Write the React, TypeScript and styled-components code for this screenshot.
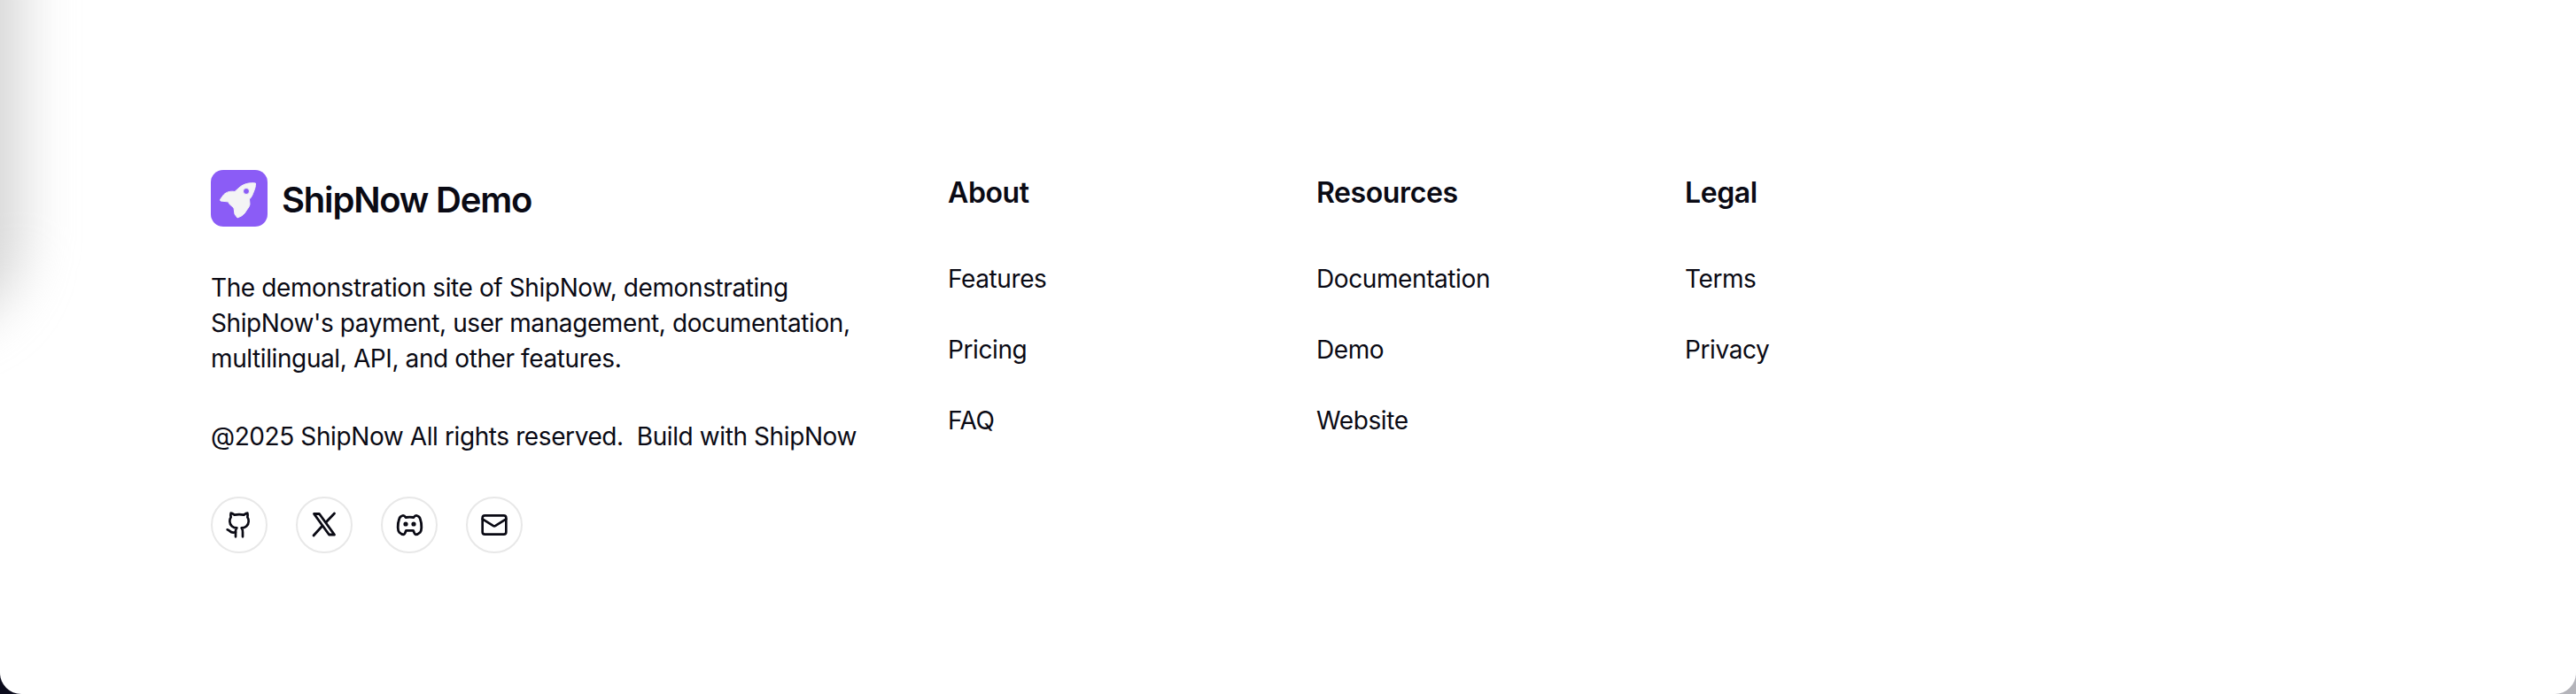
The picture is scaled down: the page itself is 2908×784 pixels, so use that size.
import React from "react";
import styled, { createGlobalStyle } from "styled-components";
import { Github, Mail } from "lucide-react";

const GlobalStyle = createGlobalStyle`
  html, body {
    margin: 0;
    padding: 0;
    background: linear-gradient(90deg, #0b0b1c 50%, #b4b4ba 50%);
  }
  * { box-sizing: border-box; }
`;

const Page = styled.footer`
  position: relative;
  width: 2908px;
  height: 784px;
  overflow: hidden;
  background: #fff;
  border-radius: 0 0 24px 24px;
  padding: 192px 238px 0;
  display: grid;
  grid-template-columns: 832px 416px 416px 416px;
  align-items: start;
  font-family: Inter, "Liberation Sans", sans-serif;
  color: #0a0a14;
  letter-spacing: -0.4px;
`;

const EdgeShade = styled.div`
  position: absolute;
  left: -80px;
  top: -80px;
  width: 104px;
  height: 450px;
  border-radius: 0 40px 100px 0;
  background: rgba(190, 190, 190, 0.65);
  filter: blur(30px);
  pointer-events: none;
`;

const Brand = styled.div`
  display: flex;
  flex-direction: column;
`;

const LogoRow = styled.div`
  display: flex;
  align-items: center;
  gap: 16px;
  height: 64px;
`;

const LogoMark = styled.svg`
  width: 64px;
  height: 64px;
  display: block;
`;

const LogoText = styled.span`
  font-size: 40px;
  line-height: 60px;
  padding-top: 4px;
  font-weight: 600;
  letter-spacing: -1.2px;
`;

const Description = styled.p`
  margin: 49px 0 0;
  width: 760px;
  font-size: 28px;
  line-height: 40px;
`;

const Copyright = styled.p`
  margin: 48px 0 0;
  font-size: 28px;
  line-height: 40px;
  white-space: pre;
`;

const Socials = styled.div`
  display: flex;
  gap: 32px;
  margin-top: 48px;
`;

const SocialLink = styled.a`
  width: 64px;
  height: 64px;
  border-radius: 50%;
  border: 2px solid #e8e8e8;
  display: flex;
  align-items: center;
  justify-content: center;
  color: #0a0a14;
`;

const Glyph = styled.svg`
  width: 40px;
  height: 40px;
  flex: none;
  fill: none;
  stroke: currentColor;
  stroke-width: 2.8;
  stroke-linecap: round;
  stroke-linejoin: round;
`;

const Column = styled.nav`
  display: flex;
  flex-direction: column;
`;

const ColumnTitle = styled.h3`
  margin: 0 0 51px;
  font-size: 32px;
  line-height: 52px;
  font-weight: 600;
`;

const ColumnLink = styled.a`
  font-size: 28px;
  line-height: 40px;
  margin-bottom: 40px;
`;

const columns = [
  { title: "About", links: ["Features", "Pricing", "FAQ"] },
  { title: "Resources", links: ["Documentation", "Demo", "Website"] },
  { title: "Legal", links: ["Terms", "Privacy"] },
];

const App = () => (
  <>
    <GlobalStyle />
    <Page>
      <EdgeShade />
      <Brand>
        <LogoRow>
          <LogoMark viewBox="0 0 64 64">
            <rect width="64" height="64" rx="14" fill="#8b5cf6" />
            <path
              fillRule="evenodd"
              fill="#f4f4f5"
              stroke="#f4f4f5"
              strokeLinejoin="round"
              d="M50.5 15C44 14 37 15.5 32 20L27 24.5C22 23.5 17.5 25 14.5 28L10.5 33.5L11 35L20 36L20.5 38L26 43L27 50L30 54L34.5 52C37.5 50 39 48 40 46C42 43 44 41 44 38.5L43.5 33C46 31 47.5 27 48.5 24C50 21 50.5 18 50.5 15ZM40 20.5A3.5 3.5 0 1 1 40 27.5A3.5 3.5 0 1 1 40 20.5Z"
            />
          </LogoMark>
          <LogoText>ShipNow Demo</LogoText>
        </LogoRow>
        <Description>
          The demonstration site of ShipNow, demonstrating ShipNow's payment,
          user management, documentation, multilingual, API, and other features.
        </Description>
        <Copyright>@2025 ShipNow All rights reserved.  Build with ShipNow</Copyright>
        <Socials>
          <SocialLink>
            <Github size={32} />
          </SocialLink>
          <SocialLink>
            <Glyph viewBox="0 0 40 40">
              <path d="M8.5 7.5H14.5L31.5 31H25.5Z" />
              <path d="M31.5 7L22 17" />
              <path d="M8 32L17.5 21.5" />
            </Glyph>
          </SocialLink>
          <SocialLink>
            <Glyph viewBox="0 0 40 40">
              <path d="M12.5 9.5C10.5 10 9.3 11 8.7 13C7.5 16.5 7 20 7.2 23C7.3 25.5 7.6 27 8.6 28.2C10.2 29.8 12.5 30.8 14 30.8C15 30.8 15.5 28 16.5 26.3H24.5C25.5 28 26 30.8 27 30.8C28.5 30.8 30.8 29.8 32.4 28.2C33.4 27 33.7 25.5 33.8 23C34 20 33.5 16.5 32.3 13C31.7 11 30.5 10 28.5 9.5C27 9.2 26 10 25 11.5C22 11 19 11 16 11.5C15 10 14 9.2 12.5 9.5Z" />
              <circle cx="16" cy="19" r="1.2" />
              <circle cx="25" cy="19" r="1.2" />
            </Glyph>
          </SocialLink>
          <SocialLink>
            <Mail size={32} />
          </SocialLink>
        </Socials>
      </Brand>
      {columns.map((col) => (
        <Column key={col.title}>
          <ColumnTitle>{col.title}</ColumnTitle>
          {col.links.map((link) => (
            <ColumnLink key={link}>{link}</ColumnLink>
          ))}
        </Column>
      ))}
    </Page>
  </>
);

export default App;
